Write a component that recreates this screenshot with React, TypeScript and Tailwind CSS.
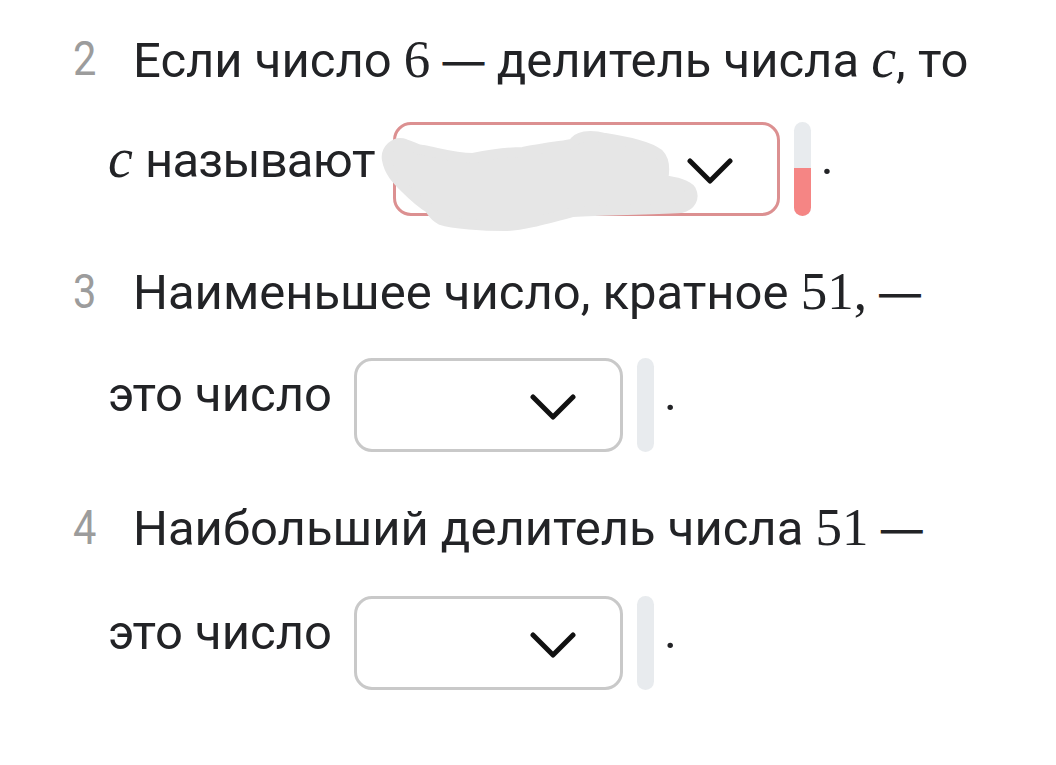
import { ReactNode } from 'react';

const M = ({ children, italic }: { children: ReactNode; italic?: boolean }) => (
  <span
    className={`font-['Liberation_Serif',serif] font-normal leading-none ${
      italic ? 'text-[56px] italic' : 'text-[53px]'
    }`}
  >
    {children}
  </span>
);

const Dash = () => (
  <span className="font-['Inter',sans-serif] text-[42px] leading-none">—</span>
);

const Chevron = () => (
  <svg width="46" height="26" viewBox="0 0 46 26" fill="none">
    <polyline
      points="3,3 23,23 43,3"
      stroke="#111"
      strokeWidth="5"
      strokeLinecap="round"
      strokeLinejoin="round"
    />
  </svg>
);

// the grey smudge someone painted over the chosen answer
const Smudge = () => (
  <svg
    className="absolute left-0 top-0 overflow-visible pointer-events-none"
    width="300"
    height="100"
    viewBox="0 0 300 100"
  >
    <path
      d="M-6 38 C-8 28 2 18 12 22 C20 24 24 28 30 28 C50 32 62 36 80 36 C100 32 118 30 130 30 C150 26 168 24 180 22 C184 14 196 12 212 16 C236 20 256 24 266 32 C272 38 272 48 270 58 C282 60 294 62 298 68 C302 76 298 84 288 86 C250 88 210 88 180 90 C150 98 128 104 112 104 C90 104 60 102 48 98 C40 94 38 88 36 86 C26 80 18 72 12 66 C4 58 -4 50 -6 38 Z"
      fill="#e6e6e6"
      stroke="#e6e6e6"
      strokeWidth="10"
      strokeLinejoin="round"
    />
  </svg>
);

const Select = ({
  width,
  wrong,
  smudged,
}: {
  width: string;
  wrong?: boolean;
  smudged?: boolean;
}) => (
  <div className="relative">
    <div
      className={`flex h-[94px] items-center justify-end rounded-[18px] border-[3px] bg-white pr-[44px] ${width} ${
        wrong ? 'border-[#dc9091]' : 'border-[#c9c9c9]'
      }`}
    >
      <div className="mt-[4px]">
        <Chevron />
      </div>
    </div>
    {smudged && <Smudge />}
  </div>
);

const Meter = ({ wrong }: { wrong?: boolean }) => (
  <div className="flex h-[94px] w-[17px] flex-col overflow-hidden rounded-full bg-[#e8ebee]">
    {wrong && <div className="mt-[46px] flex-1 bg-[#f58584]" />}
  </div>
);

interface Item {
  num: number;
  first: ReactNode;
  second: ReactNode;
  width: string;
  gap: string;
  wrong?: boolean;
  mt: string;
}

const items: Item[] = [
  {
    num: 2,
    first: (
      <>
        Если число <M>6</M> <Dash /> делитель числа <M italic>c</M>, то
      </>
    ),
    second: (
      <>
        <M italic>c</M> <span className="tracking-[-0.8px]">называют</span>
      </>
    ),
    width: 'w-[387px]',
    gap: 'mr-[18px]',
    wrong: true,
    mt: 'mt-[29px]',
  },
  {
    num: 3,
    first: (
      <>
        Наименьшее число, кратное <M>51,</M> <Dash />
      </>
    ),
    second: <>это число</>,
    width: 'w-[269px]',
    gap: 'mr-[22px]',
    mt: 'mt-[32px]',
  },
  {
    num: 4,
    first: (
      <>
        Наибольший делитель числа <M>51</M> <Dash />
      </>
    ),
    second: <>это число</>,
    width: 'w-[269px]',
    gap: 'mr-[22px]',
    mt: 'mt-[34px]',
  },
];

export default function App() {
  return (
    <div className="min-h-[765px] w-[1056px] bg-white pl-[108px] pt-[33px] font-['Roboto',sans-serif] text-[#222326]">
      <div className="flex flex-col gap-[50px]">
        {items.map((it) => (
          <div key={it.num}>
            {/* question line */}
            <div className="flex h-[60px] items-center whitespace-pre text-[49px] leading-none">
              <span className="-ml-[35px] mb-[10px] w-[60px] origin-left scale-x-[0.85] text-[49px] text-[#9c9c9c]">
                {it.num}
              </span>
              <span className="mb-[10px]">{it.first}</span>
            </div>

            {/* answer line */}
            <div className={`flex items-center ${it.mt}`}>
              <span className={`mb-[22px] whitespace-pre text-[49px] leading-none ${it.gap}`}>
                {it.second}
              </span>
              <Select width={it.width} wrong={it.wrong} smudged={it.wrong} />
              <div className="ml-[14px]">
                <Meter wrong={it.wrong} />
              </div>
              <span className="mb-[24px] ml-[10px] text-[49px] leading-none">.</span>
            </div>
          </div>
        ))}
      </div>
    </div>
  );
}
